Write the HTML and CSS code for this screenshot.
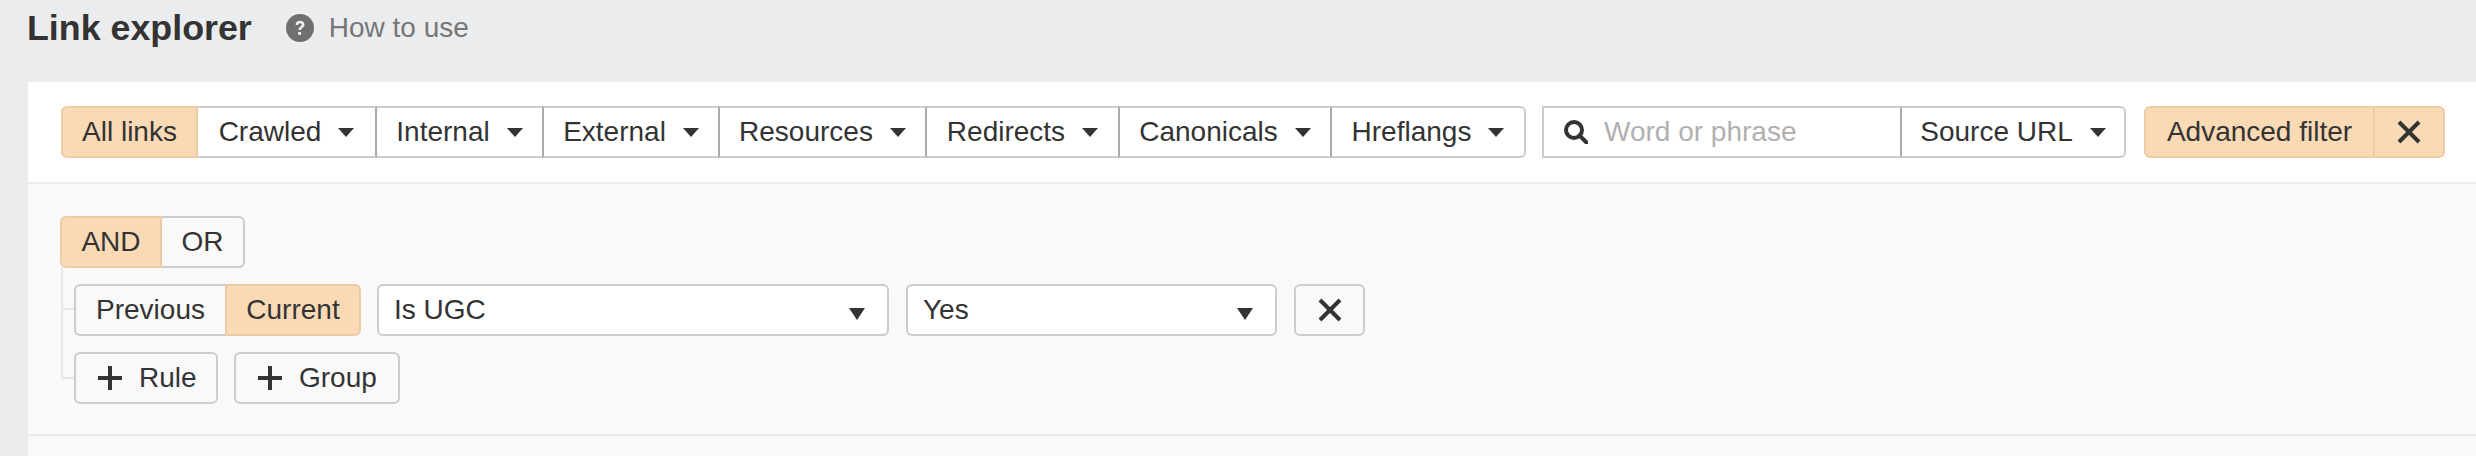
FILE: index.html
```html
<!DOCTYPE html>
<html lang="en">
  <head>
    <meta charset="UTF-8" />
    <title>Link explorer</title>
    <link rel="stylesheet" href="styles.css">
  </head>
  <body>
    <div class="top">
      <h1>Link explorer</h1>
      <a class="help">
        <svg class="help-icon" viewBox="0 0 28 28" width="28" height="28">
          <circle cx="14" cy="14" r="14" fill="#6f6f6f" />
          <path d="M9.6 11c0-2.7 1.9-4.2 4.5-4.2 2.600 0 4.400 1.500 4.400 3.700 0 1.700-.9 2.600-2.100 3.400-1.100.7-1.300 1.100-1.300 2.200h-2.600c0-1.900.5-2.800 1.900-3.700 1-.7 1.400-1.100 1.400-1.800 0-.8-.7-1.400-1.700-1.400-1.100 0-1.800.7-1.900 1.800z" fill="#ebecee" />
          <rect x="12.100" y="18" width="3" height="3" fill="#ebecee" />
        </svg>
        How to use
      </a>
    </div>

    <div class="panel">
      <div class="toolbar">
        <div class="group">
          <button class="seg on w-all">All links</button>
          <button class="seg w-crawled">Crawled <i class="caret"></i></button>
          <button class="seg w-internal">Internal <i class="caret"></i></button>
          <button class="seg w-external">External <i class="caret"></i></button>
          <button class="seg w-resources">Resources <i class="caret"></i></button>
          <button class="seg w-redirects">Redirects <i class="caret"></i></button>
          <button class="seg w-canonicals">Canonicals <i class="caret"></i></button>
          <button class="seg w-hreflangs">Hreflangs <i class="caret"></i></button>
        </div>
        <div class="group search">
          <div class="seg search-box">
            <svg viewBox="0 0 24 24" width="24" height="24">
              <circle cx="10" cy="10" r="8" fill="none" stroke="#333" stroke-width="4" />
              <path d="M15.500 15.500l7 7" stroke="#333" stroke-width="4" stroke-linecap="round" />
            </svg>
            <span class="placeholder">Word or phrase</span>
          </div>
          <button class="seg w-source">Source URL <i class="caret"></i></button>
        </div>
        <div class="group orange">
          <button class="seg on w-adv">Advanced filter</button>
          <button class="seg on w-close">
            <svg viewBox="0 0 24 24" width="24" height="24"><path d="M2 2l20 20M22 2L2 22" stroke="#333" stroke-width="4" /></svg>
          </button>
        </div>
      </div>

      <div class="filter">
        <div class="group logic">
          <button class="seg on w-and">AND</button>
          <button class="seg plain w-or">OR</button>
        </div>
        <div class="rows">
          <div class="row">
            <div class="group">
              <button class="seg plain w-prev">Previous</button>
              <button class="seg on w-cur">Current</button>
            </div>
            <button class="select w-ugc">Is UGC <i class="caret"></i></button>
            <button class="select w-yes">Yes <i class="caret"></i></button>
            <button class="btn w-x">
              <svg viewBox="0 0 24 24" width="24" height="24"><path d="M2 2l20 20M22 2L2 22" stroke="#333" stroke-width="4" /></svg>
            </button>
          </div>
          <div class="row">
            <button class="btn add w-rule"><i class="plus"></i>Rule</button>
            <button class="btn add w-grp"><i class="plus"></i>Group</button>
          </div>
        </div>
      </div>
      <div class="rest"></div>
    </div>
  </body>
</html>
```

FILE: styles.css
```css
* {
  box-sizing: border-box;
}

html,
body {
  height: 100%;
}

body {
  margin: 0;
  display: flex;
  flex-direction: column;
  font-family: "Liberation Sans", Arial, sans-serif;
  font-size: 28px;
  color: #333;
  background-color: #ebecee;
  overflow: hidden;
}

button {
  font: inherit;
  color: inherit;
  margin: 0;
}

.top {
  height: 82px;
  padding: 6px 0 0 27px;
  display: flex;
  align-items: flex-start;
}

h1 {
  margin: 0;
  font-size: 35.8px;
  line-height: 44px;
  font-weight: bold;
}

.help {
  margin-left: 34px;
  display: flex;
  align-items: center;
  gap: 15px;
  height: 44px;
  color: #767676;
}

.panel {
  margin-left: 28px;
  flex: 1;
  display: flex;
  flex-direction: column;
  background-color: #fff;
}

.toolbar {
  height: 102px;
  padding: 24px 31px 0 33px;
  display: flex;
  border-bottom: 2px solid #ececec;
}

.group {
  display: flex;
  height: 52px;
}

.search {
  margin: 0 18px 0 16px;
}

.seg {
  height: 52px;
  padding: 0;
  display: flex;
  align-items: center;
  justify-content: center;
  gap: 17px;
  background-color: #fff;
  border: 2px solid #ccc;
  border-left: 0;
  border-right: 2px solid #aaa;
}

.seg:first-child {
  border-left: 2px solid #ccc;
  border-radius: 6px 0 0 6px;
}

.seg:last-child {
  border-right: 2px solid #ccc;
  border-radius: 0 6px 6px 0;
}

.seg.on {
  background-color: #fad9b5;
  border-color: #eccba6;
}

.seg.plain {
  background-color: #f9f9f9;
}

.caret {
  width: 0;
  height: 0;
  border-left: 8px solid transparent;
  border-right: 8px solid transparent;
  border-top: 9px solid #333;
}

.w-all { width: 137px; }
.w-crawled { width: 179px; }
.w-internal { width: 167px; }
.w-external { width: 176px; }
.w-resources { width: 207px; }
.w-redirects { width: 193px; }
.w-canonicals { width: 212px; }
.w-hreflangs { width: 194px; }

.search-box {
  width: 360px;
  justify-content: flex-start;
  padding-left: 20px;
  gap: 16px;
}

.search-box:first-child {
  border-radius: 0;
}

.placeholder {
  color: #b0b0b0;
}

.w-source { width: 224px; }
.w-adv { width: 231px; }
.w-close { width: 70px; }

.filter {
  height: 252px;
  padding: 32px 0 0 32px;
  background-color: #f9f9f9;
  border-bottom: 2px solid #ececec;
}

.logic {
  position: relative;
  z-index: 1;
}

.w-and { width: 102px; }
.w-or { width: 83px; }
.seg.w-prev {
  width: 151px;
  border-right: 0;
}
.seg.w-cur {
  width: 136px;
  border-left: 2px solid #eccba6;
}

.rows {
  margin-left: 1px;
  padding: 16px 0 0 13px;
  display: flex;
  flex-direction: column;
  gap: 16px;
  width: max-content;
  background:
    linear-gradient(#e6e6e6, #e6e6e6) 0 0 / 2px 111px no-repeat,
    linear-gradient(#e6e6e6, #e6e6e6) 0 40px / 14px 2px no-repeat,
    linear-gradient(#e6e6e6, #e6e6e6) 0 109px / 14px 2px no-repeat;
}

.row {
  display: flex;
  gap: 16px;
}

.select {
  height: 52px;
  padding: 0 22px 0 15px;
  display: flex;
  align-items: center;
  justify-content: space-between;
  background-color: #fff;
  border: 2px solid #ccc;
  border-radius: 6px;
}

.select .caret {
  border-top-width: 12px;
  margin-top: 8px;
}

.w-ugc { width: 512px; }
.w-yes {
  width: 371px;
  margin-left: 1px;
}

.btn {
  height: 52px;
  padding: 0;
  display: flex;
  align-items: center;
  justify-content: center;
  background-color: #f9f9f9;
  border: 2px solid #ccc;
  border-radius: 6px;
}

.btn.add {
  justify-content: flex-start;
  padding-left: 22px;
}

.w-x {
  width: 71px;
  margin-left: 1px;
}
.w-rule { width: 144px; }
.w-grp { width: 166px; }

.plus {
  width: 24px;
  height: 24px;
  margin-right: 17px;
  background:
    linear-gradient(#333, #333) center / 24px 4px no-repeat,
    linear-gradient(#333, #333) center / 4px 24px no-repeat;
}

.rest {
  flex: 1;
  background-color: #f9f9f9;
}
```
